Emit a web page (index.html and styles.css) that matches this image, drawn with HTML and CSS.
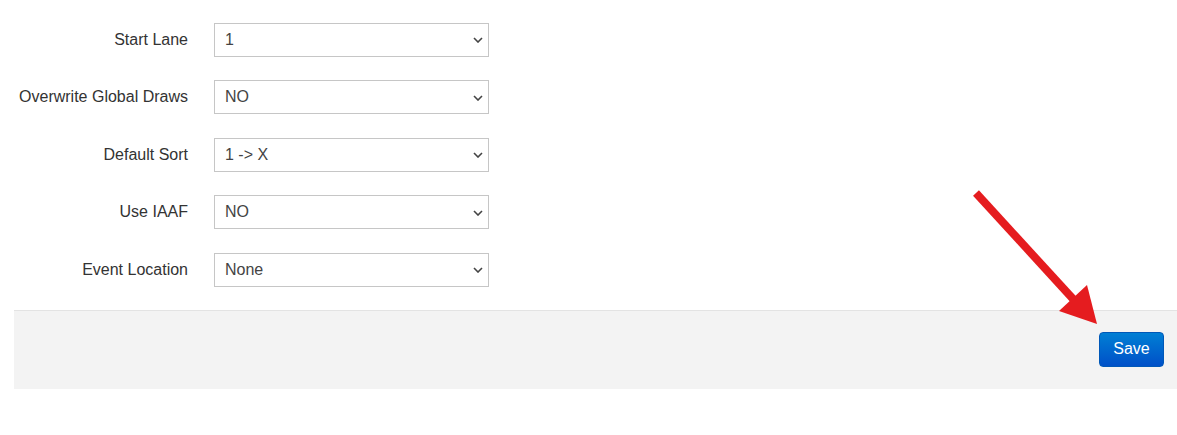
FILE: index.html
```html
<!DOCTYPE html>
<html>
<head>
<meta charset="utf-8">
<link rel="stylesheet" href="styles.css">
</head>
<body>
<div class="page">
  <form class="form">
    <label class="lbl">Start Lane</label>
    <div class="sel"><span>1</span><svg class="chev" viewBox="0 0 10 6"><path d="M1 1 L5 5 L9 1" /></svg></div>
    <label class="lbl">Overwrite Global Draws</label>
    <div class="sel"><span>NO</span><svg class="chev" viewBox="0 0 10 6"><path d="M1 1 L5 5 L9 1" /></svg></div>
    <label class="lbl">Default Sort</label>
    <div class="sel"><span>1 -&gt; X</span><svg class="chev" viewBox="0 0 10 6"><path d="M1 1 L5 5 L9 1" /></svg></div>
    <label class="lbl">Use IAAF</label>
    <div class="sel"><span>NO</span><svg class="chev" viewBox="0 0 10 6"><path d="M1 1 L5 5 L9 1" /></svg></div>
    <label class="lbl">Event Location</label>
    <div class="sel"><span>None</span><svg class="chev" viewBox="0 0 10 6"><path d="M1 1 L5 5 L9 1" /></svg></div>
  </form>
  <div class="footer">
    <button class="save" type="button">Save</button>
  </div>
  <svg class="arrow" width="1177" height="435" viewBox="0 0 1177 435">
    <line x1="976" y1="193" x2="1074" y2="300" stroke="#e51c1f" stroke-width="8" />
    <polygon points="1059,311 1087,285 1097,324" fill="#e51c1f" />
  </svg>
</div>
</body>
</html>
```

FILE: styles.css
```css
html, body {
  margin: 0;
  padding: 0;
  background: #fff;
}
.page {
  position: relative;
  width: 1177px;
  height: 435px;
  font-family: "Liberation Sans", Arial, sans-serif;
  font-size: 16px;
  color: #333;
}
.form {
  display: grid;
  grid-template-columns: 174px 275px;
  column-gap: 26px;
  row-gap: 23.5px;
  padding: 22.5px 0 0 14px;
  margin: 0;
  align-items: center;
}
.lbl {
  text-align: right;
  white-space: nowrap;
  line-height: 20px;
}
.sel {
  box-sizing: border-box;
  height: 34px;
  border: 1px solid #c6c6c6;
  background: #fff;
  display: flex;
  align-items: center;
  justify-content: space-between;
  padding: 0 5px 0 10px;
  color: #444;
}
.chev {
  width: 10px;
  height: 6px;
  fill: none;
  stroke: #444;
  stroke-width: 1.6;
  margin-top: 1px;
}
.sel span {
  line-height: 20px;
}
.footer {
  margin: 23px 0 0 14px;
  box-sizing: border-box;
  height: 79px;
  border-top: 1px solid #e3e3e3;
  background: #f3f3f3;
  display: flex;
  justify-content: flex-end;
  align-items: flex-start;
  padding: 21px 13px 0 0;
}
.save {
  box-sizing: border-box;
  width: 65px;
  height: 35px;
  border: 1px solid #0058b8;
  border-radius: 4px;
  background: linear-gradient(#007fd4, #0050c8);
  color: #fff;
  font-family: "Liberation Sans", Arial, sans-serif;
  font-size: 16px;
  padding: 0;
}
.arrow {
  position: absolute;
  left: 0;
  top: 0;
  pointer-events: none;
}
```
